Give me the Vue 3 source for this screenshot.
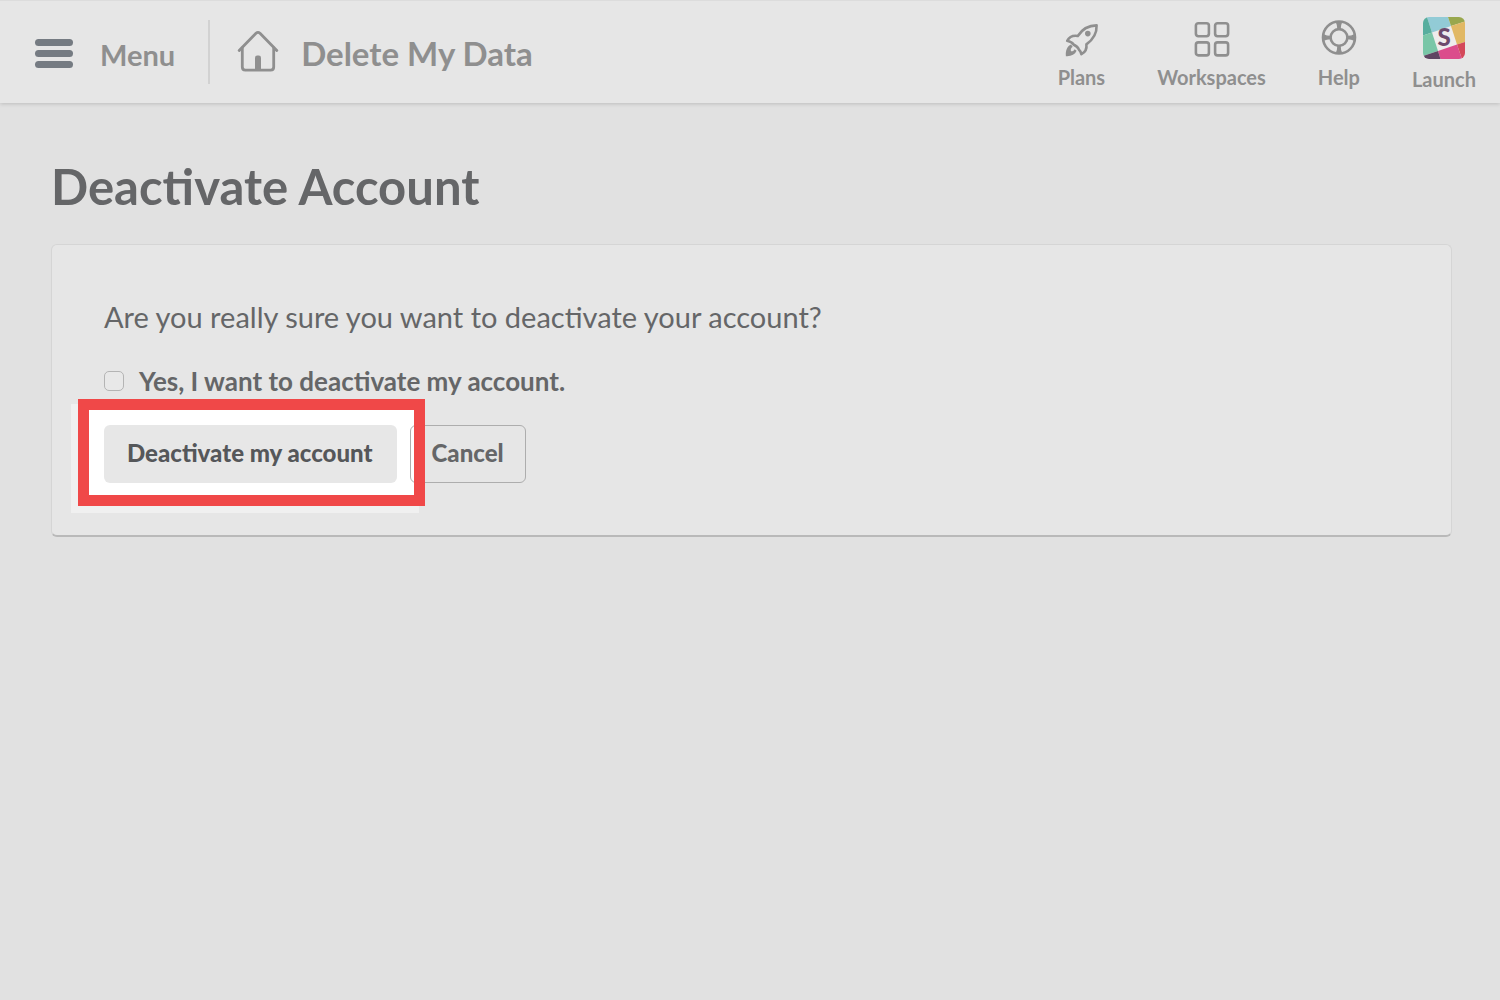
<script setup>
import { ref } from 'vue'

const confirmed = ref(false)
</script>

<template>
  <div class="page">
    <header class="topbar">
      <button class="menu" type="button">
        <svg class="bars" viewBox="0 0 40 32" aria-hidden="true">
          <rect x="1" y="1" width="38" height="7" rx="3.5" />
          <rect x="1" y="12" width="38" height="7" rx="3.5" />
          <rect x="1" y="23" width="38" height="7" rx="3.5" />
        </svg>
        <span>Menu</span>
      </button>
      <a class="home" href="#">
        <svg class="house" viewBox="0 0 42 42" fill="none" stroke="currentColor" stroke-width="2.8" stroke-linecap="round" stroke-linejoin="round" aria-hidden="true">
          <path d="M2.2 20.5 L19 3.3 Q21 1.4 23 3.3 L39.8 20.5" />
          <path d="M5.3 18 V37 Q5.3 40.1 8.4 40.1 H33.6 Q36.7 40.1 36.7 37 V18" />
          <path d="M18 39 V28 Q18 25.6 20.2 25.6 H21.8 Q24 25.6 24 28 V39 Z" fill="currentColor" stroke="none" />
        </svg>
        <span>Delete My Data</span>
      </a>
      <nav class="links">
        <a href="#">
          <svg class="icon" viewBox="0 0 42 42" fill="none" stroke="currentColor" stroke-width="2.6" stroke-linejoin="round" aria-hidden="true">
            <path d="M36.6 6.4 C28 6.4 22 10.5 17.8 17 C13 16.2 9.2 18 7.2 21.8 C10.5 22.6 12.3 23.6 13.5 25.5 C16.8 27 18 28.2 18.8 30.4 C20.4 31.8 21 33.2 21.4 35.2 C25.6 33 27 29.8 26.4 25.4 C33 20.6 37 15.2 36.6 6.4 Z" />
            <circle cx="27.8" cy="14.6" r="2.8" fill="currentColor" stroke="none" />
            <path d="M11 25.6 C7 27.4 5.4 31.6 5.9 37.2 C11 37.6 14.8 35.8 16.6 31.8 L14.6 30.2 C13.6 32 12.4 32.5 11 32.3 C10.4 30.4 11 29 12.7 27.8 Z" fill="currentColor" stroke="none" />
          </svg>
          <span>Plans</span>
        </a>
        <a href="#">
          <svg class="icon" viewBox="0 0 42 42" fill="none" stroke="currentColor" stroke-width="2.6" aria-hidden="true">
            <rect x="4.9" y="4.2" width="13" height="13" rx="2.4" />
            <rect x="24.1" y="4.2" width="13" height="13" rx="2.4" />
            <rect x="4.9" y="23.4" width="13" height="13" rx="2.4" />
            <rect x="24.1" y="23.4" width="13" height="13" rx="2.4" />
          </svg>
          <span>Workspaces</span>
        </a>
        <a href="#">
          <svg class="icon" viewBox="0 0 42 42" fill="none" stroke="currentColor" stroke-width="2.6" aria-hidden="true">
            <circle cx="21" cy="18.5" r="16" />
            <circle cx="21" cy="18.5" r="8.4" />
            <path d="M18.4 3 Q20 6 20 10 H22 Q22 6 23.6 3 Z M18.4 34 Q20 31 20 27 H22 Q22 31 23.6 34 Z M5.5 15.9 Q8.5 17.5 12.5 17.5 V19.5 Q8.5 19.5 5.5 21.1 Z M36.5 15.9 Q33.5 17.5 29.5 17.5 V19.5 Q33.5 19.5 36.5 21.1 Z" fill="currentColor" stroke-width="1.4" />
          </svg>
          <span>Help</span>
        </a>
        <a class="launch" href="#">
          <svg class="icon" viewBox="0 0 42 42" aria-hidden="true">
            <defs><clipPath id="tile"><rect width="42" height="42" rx="6" /></clipPath></defs>
            <g clip-path="url(#tile)">
              <rect width="42" height="42" fill="#eeecec" />
              <path d="M4 0 H25 L28 9 L9 15.5 Z" fill="#92cbd6" />
              <path d="M0 0 H4 L9 15.5 L0 18.5 Z" fill="#57ae9e" />
              <path d="M0 18.5 L9 15.5 L15 34 L0 39 Z" fill="#79c6a7" />
              <path d="M25 0 H42 V4.5 L28 9 Z" fill="#98a74d" />
              <path d="M28 9 L42 4.5 V25 L34 27.5 Z" fill="#e1b864" />
              <path d="M15 34 L34 27.5 L39 42 H17.5 Z" fill="#db4c8c" />
              <path d="M34 27.5 L42 25 V42 H39 Z" fill="#d4485a" />
              <path d="M0 39 L15 34 L17.5 42 H0 Z" fill="#5f4662" />
            </g>
            <text x="21" y="29" text-anchor="middle" class="mark">S</text>
          </svg>
          <span>Launch</span>
        </a>
      </nav>
    </header>

    <main class="content">
      <h1>Deactivate Account</h1>
      <form class="card" @submit.prevent>
        <p>Are you really sure you want to deactivate your account?</p>
        <div class="confirm">
          <input id="confirm" v-model="confirmed" type="checkbox" />
          <label for="confirm">Yes, I want to deactivate my account.</label>
        </div>
        <div class="actions">
          <div class="spotlight">
            <button class="btn primary" type="submit">Deactivate my account</button>
          </div>
          <button class="btn cancel" type="button">Cancel</button>
        </div>
      </form>
    </main>
  </div>
</template>

<style>
body {
  margin: 0;
  background: #e1e1e1;
}
</style>

<style scoped>
.page {
  min-height: 100vh;
  background: #e1e1e1;
  color: #656668;
  font-family: Lato, "Liberation Sans", sans-serif;
}

a {
  color: inherit;
  text-decoration: none;
}

button {
  font-family: inherit;
  cursor: pointer;
}

.topbar {
  box-sizing: border-box;
  display: flex;
  align-items: center;
  height: 103px;
  padding: 0 24px 0 34px;
  border-top: 1px solid #dcdcdc;
  background: #e6e6e6;
  box-shadow: 0 1px 4px rgba(0, 0, 0, 0.16);
  color: #8f8f8f;
}

.menu {
  display: flex;
  align-items: center;
  gap: 26px;
  height: 64px;
  padding: 5px 33px 0 0;
  border: 0;
  border-right: 2px solid #d2d2d2;
  background: none;
  color: inherit;
  font-size: 29px;
  font-weight: 700;
}

.bars {
  width: 40px;
  height: 32px;
  margin-bottom: 2px;
  fill: #757b82;
}

.home {
  display: flex;
  align-items: center;
  gap: 22px;
  padding: 2px 0 0 27px;
  font-size: 33px;
  font-weight: 700;
}

.house {
  width: 42px;
  height: 42px;
  margin-bottom: 4px;
}

.links {
  display: flex;
  gap: 52px;
  margin-left: auto;
  padding-top: 4px;
  font-size: 20px;
  font-weight: 700;
  line-height: 24px;
}

.links a {
  display: flex;
  flex-direction: column;
  align-items: center;
  gap: 4px;
  padding-top: 2px;
}

.links .launch {
  gap: 8px;
  padding-top: 0;
}

.icon {
  width: 42px;
  height: 42px;
}

.mark {
  fill: #6c4a6c;
  font-size: 24px;
  font-weight: 900;
}

.content {
  padding: 53px 48px 48px 51px;
}

h1 {
  margin: 0 0 28px;
  font-size: 49px;
  font-weight: 700;
  line-height: 60px;
}

.card {
  padding: 52px;
  border: 1px solid #d5d5d5;
  border-bottom: 2px solid #b9b9b9;
  border-radius: 6px;
  background: #e6e6e6;
}

.card p {
  margin: 0 0 26px;
  font-size: 29px;
  line-height: 40px;
}

.confirm {
  display: flex;
  align-items: center;
  gap: 15px;
  margin-bottom: 26px;
  font-size: 26px;
  font-weight: 700;
  line-height: 36px;
}

.confirm input {
  appearance: none;
  box-sizing: border-box;
  width: 20px;
  height: 20px;
  margin: 0;
  border: 1px solid #b4b4b4;
  border-radius: 5px;
  background: #e8e8e8;
}

.confirm input:checked {
  background: #757b82;
}

.actions {
  display: flex;
  gap: 13px;
}

.btn {
  height: 58px;
  padding: 0 21px 3px;
  border-radius: 6px;
  font-size: 24px;
  font-weight: 900;
  white-space: nowrap;
}

.primary {
  position: relative;
  padding: 0 24px 3px 23px;
  border: 0;
  background: #e7e7e7;
  color: #55575a;
}

.cancel {
  position: relative;
  border: 1px solid #adadad;
  background: none;
  color: #656668;
}

/* White patch behind the main button, with its pale offset copy */
.spotlight {
  position: relative;
}

.spotlight::before {
  content: "";
  position: absolute;
  inset: -16px -17px -13px -16px;
  background: #fff;
  box-shadow: -6px 6px 0 11px #f0f0f0;
}

/* Red frame drawn over both buttons */
.spotlight::after {
  content: "";
  position: absolute;
  z-index: 1;
  inset: -26px -28px -23px -26px;
  border: 11px solid #f04848;
  pointer-events: none;
}
</style>
